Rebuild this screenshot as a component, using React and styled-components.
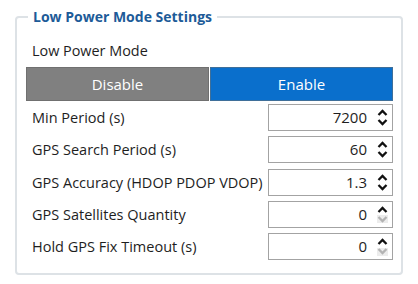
import React from "react";
import styled, { createGlobalStyle } from "styled-components";

const Global = createGlobalStyle`
  html, body { margin: 0; padding: 0; background: #fff; }
  body { font-family: "Open Sans", "Noto Sans", sans-serif; color: #1e1e1e; }
`;

const Page = styled.div`
  padding: 7px 15px 0 15px;
  width: 388px;
`;

const Fieldset = styled.fieldset`
  margin: 0;
  padding: 0 8px 13px 9px;
  border: 2px solid #dde2e6;
  border-radius: 4px;
  min-width: 0;
`;

const Legend = styled.legend`
  padding: 0 5px;
  margin-left: 2px;
  font-size: 14px;
  line-height: 20px;
  font-weight: 700;
  color: #1d5b98;
`;

const Title = styled.div`
  padding: 14px 0 0 6px;
  height: 40px;
  box-sizing: border-box;
  font-size: 14.4px;
  line-height: 19px;
`;

const Toggle = styled.div`
  display: grid;
  grid-template-columns: 1fr 1fr;
  gap: 1px;
`;

const ToggleButton = styled.div`
  height: 34px;
  box-sizing: border-box;
  display: flex;
  align-items: center;
  justify-content: center;
  font-size: 15px;
  color: #fff;
  background: ${(p) => (p.$active ? "#0a6fcc" : "#808080")};
  border: 1px solid ${(p) => (p.$active ? "#3f6f99" : "#707070")};
`;

const Rows = styled.div`
  display: grid;
  row-gap: 5.25px;
  padding-top: 3px;
`;

const Row = styled.div`
  display: flex;
  align-items: center;
  justify-content: space-between;
  height: 27px;
`;

const Label = styled.div`
  padding-left: 6px;
  font-size: 14.5px;
  line-height: 19px;
`;

const Input = styled.div`
  width: 125px;
  height: 27px;
  box-sizing: border-box;
  border: 1px solid #a3a3a3;
  display: flex;
  align-items: center;
  justify-content: flex-end;
  padding-right: 4px;
  background: #fff;
`;

const Value = styled.span`
  font-size: 15px;
  line-height: 19px;
  margin-right: 10px;
`;

const Spinner = styled.div`
  display: flex;
  flex-direction: column;
  width: 11px;
  gap: 2px;
`;

const Arrow = styled.div`
  height: 8px;
  display: flex;
  align-items: center;
  justify-content: center;
  background: ${(p) => (p.$disabled ? "#ececec" : "transparent")};
`;

const Chevron = ({ up, disabled }) => (
  <Arrow $disabled={disabled}>
    <svg width="11" height="7" viewBox="0 0 11 7">
      <polyline
        points={up ? "1.5,6 5.5,2 9.5,6" : "1.5,1 5.5,5 9.5,1"}
        fill="none"
        stroke={disabled ? "#b3b3b3" : "#111"}
        strokeWidth="2.3"
      />
    </svg>
  </Arrow>
);

const rows = [
  { label: "Min Period (s)", value: "7200" },
  { label: "GPS Search Period (s)", value: "60" },
  { label: "GPS Accuracy (HDOP PDOP VDOP)", value: "1.3" },
  { label: "GPS Satellites Quantity", value: "0", min: true },
  { label: "Hold GPS Fix Timeout (s)", value: "0", min: true },
];

export default function App() {
  return (
    <>
      <Global />
      <Page>
        <Fieldset>
          <Legend>Low Power Mode Settings</Legend>
          <Title>Low Power Mode</Title>
          <Toggle>
            <ToggleButton>Disable</ToggleButton>
            <ToggleButton $active>Enable</ToggleButton>
          </Toggle>
          <Rows>
            {rows.map((r) => (
              <Row key={r.label}>
                <Label>{r.label}</Label>
                <Input>
                  <Value>{r.value}</Value>
                  <Spinner>
                    <Chevron up />
                    <Chevron disabled={r.min} />
                  </Spinner>
                </Input>
              </Row>
            ))}
          </Rows>
        </Fieldset>
      </Page>
    </>
  );
}
